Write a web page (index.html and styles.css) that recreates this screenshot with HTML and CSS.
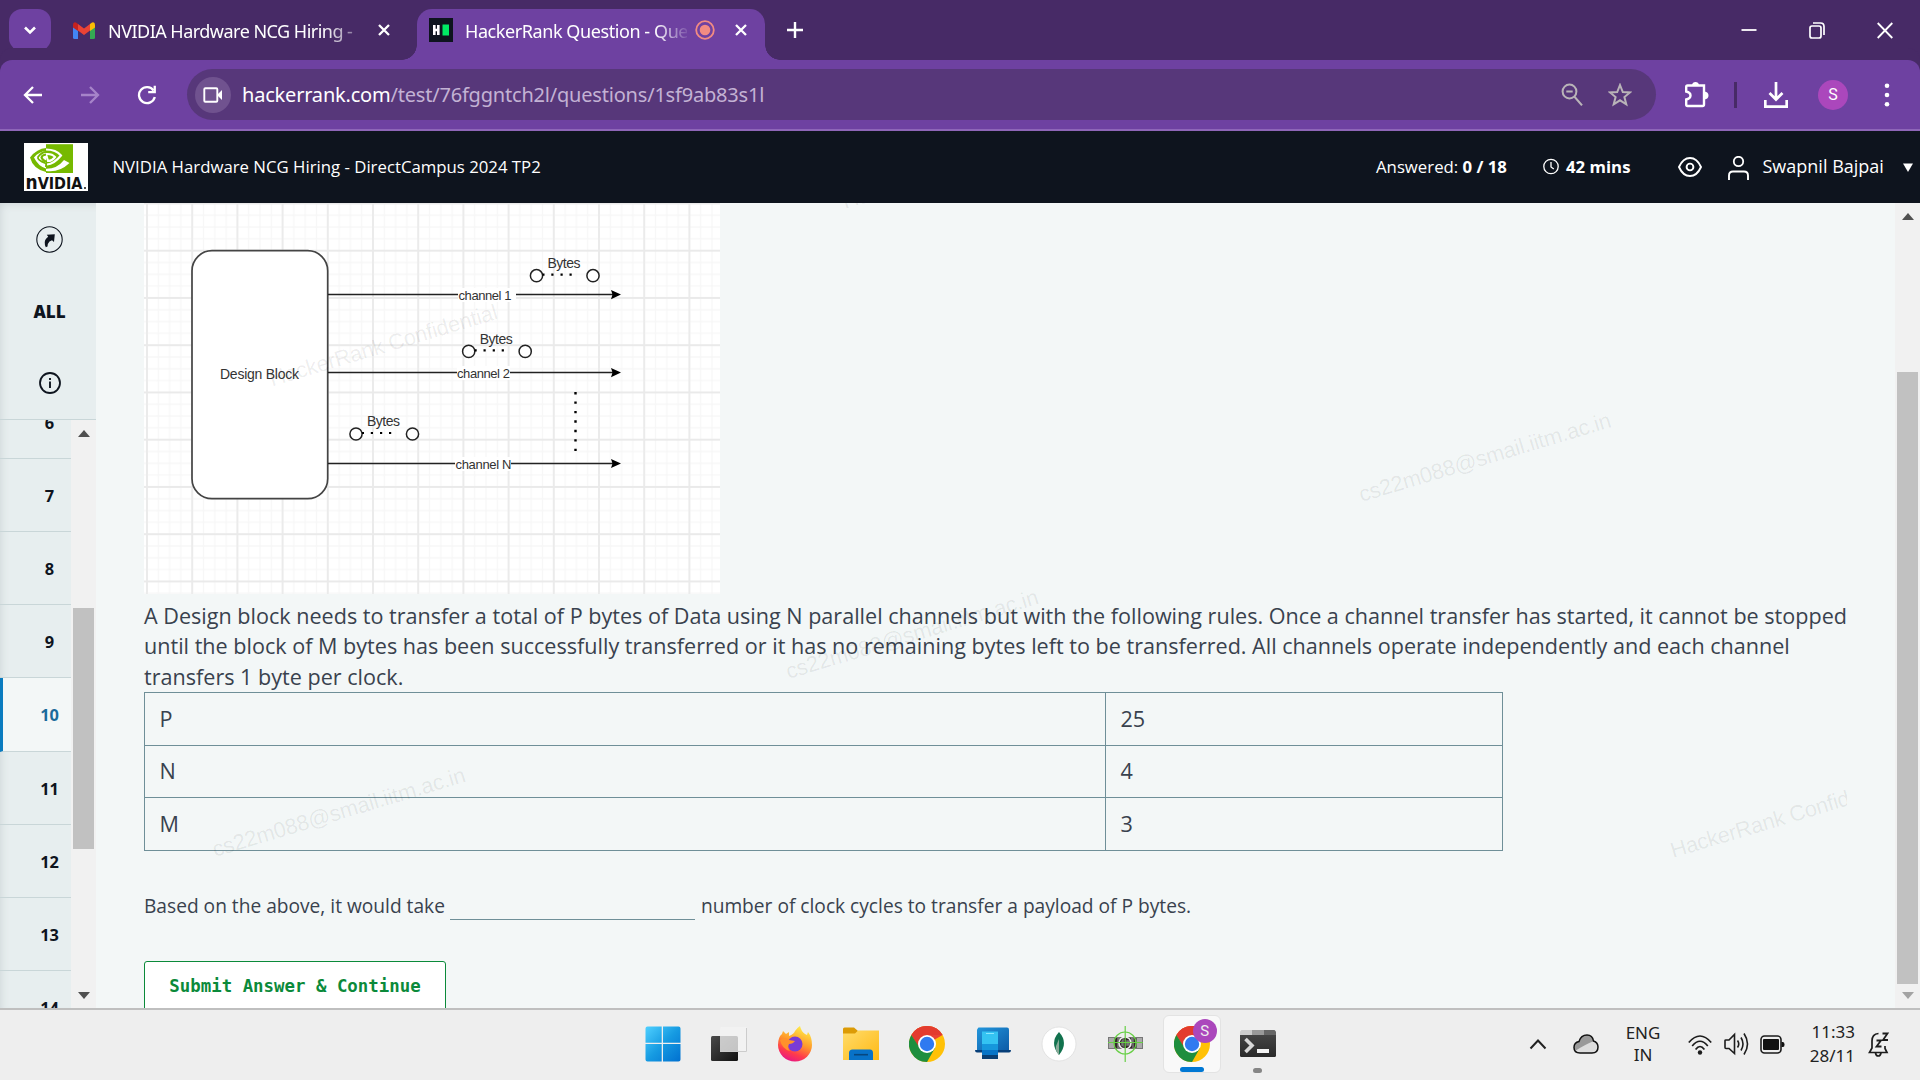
FILE: index.html
```html
<!DOCTYPE html>
<html lang="en">
<head>
<meta charset="utf-8">
<title>HackerRank Question</title>
<link rel="stylesheet" href="styles.css">
</head>
<body>
<svg width="0" height="0" class="defs">
  <defs>
    <symbol id="chrome" viewBox="0 0 36 36">
      <circle cx="18" cy="18" r="18" fill="#ffc107"/>
      <path d="M18 18 L2.4 9 A18 18 0 0 1 33.6 9 Z" fill="#ea4335"/>
      <path d="M2.4 9 A18 18 0 0 0 18 36 L26 22 L10.5 22 Z" fill="#1e8e3e"/>
      <path d="M2.4 9 L10.2 22.5 L18 18 L18 9 Z" fill="#1e8e3e"/>
      <path d="M2.4 9 A18 18 0 0 1 33.6 9 L18 9 L10.2 13.5 L9.5 20 Z" fill="#e33b2e"/>
      <circle cx="18" cy="18" r="9" fill="#fff"/>
      <circle cx="18" cy="18" r="7.2" fill="#2f7af0"/>
    </symbol>
    <linearGradient id="winBlue" x1="0" y1="0" x2="1" y2="1"><stop offset="0" stop-color="#4fd0ff"/><stop offset=".5" stop-color="#169be2"/><stop offset="1" stop-color="#0070d0"/></linearGradient>
    <linearGradient id="darkSq" x1="0" y1="0" x2="1" y2="1"><stop offset="0" stop-color="#4a4a4a"/><stop offset="1" stop-color="#111"/></linearGradient>
    <linearGradient id="fox" x1=".7" y1="0" x2=".3" y2="1"><stop offset="0" stop-color="#fff04a"/><stop offset=".45" stop-color="#ff9a2a"/><stop offset=".75" stop-color="#ff3b4b"/><stop offset="1" stop-color="#e5158a"/></linearGradient>
    <linearGradient id="folder" x1="0" y1="0" x2="1" y2="1"><stop offset="0" stop-color="#ffdc6b"/><stop offset="1" stop-color="#ffb914"/></linearGradient>
    <linearGradient id="phone" x1="0" y1="0" x2="1" y2="1"><stop offset="0" stop-color="#2296dc"/><stop offset="1" stop-color="#0c5aa6"/></linearGradient>
    <linearGradient id="term" x1="0" y1="0" x2="0" y2="1"><stop offset="0" stop-color="#444"/><stop offset="1" stop-color="#2a2a2a"/></linearGradient>
  </defs>
</svg>

<header class="tabstrip">
  <button class="tab-search"><svg width="14" height="10" viewBox="0 0 14 10"><path d="M2 2.5 L7 7.5 L12 2.5" fill="none" stroke="#fff" stroke-width="2.6"/></svg></button>
  <div class="tab">
    <svg class="gmail" width="22" height="17" viewBox="0 0 22 17">
      <path d="M0 3v12.5Q0 17 1.5 17H5V7z" fill="#4285f4"/><path d="M22 3v12.5Q22 17 20.5 17H17V7z" fill="#34a853"/>
      <path d="M17 2 L19 .5 Q22 -.5 22 3 V5.5 L17 9z" fill="#fbbc04"/><path d="M5 2 L3 .5 Q0 -.5 0 3 V5.5 L5 9z" fill="#c5221f"/><path d="M5 2 L11 6.6 L17 2 V8.5 L11 13 L5 8.5z" fill="#ea4335"/>
    </svg>
    <span class="tab-title gmail-title">NVIDIA Hardware NCG Hiring -</span>
    <svg width="14" height="14" viewBox="0 0 14 14"><path d="M2 2 L12 12 M12 2 L2 12" stroke="#fff" stroke-width="2.3"/></svg>
  </div>
  <div class="tab active">
    <svg width="24" height="24" viewBox="0 0 24 24"><path fill="#0e141e" d="M0 0h24v24H0z"/><path d="M5.3 7v10M9.3 7v10M5 12h5" stroke="#fff" stroke-width="2.6"/><path fill="#00ea64" d="M13.5 6.5h6.5v11h-6.5z"/></svg>
    <span class="tab-title hr-title">HackerRank Question - Que</span>
    <svg width="20" height="20" viewBox="0 0 20 20"><circle cx="10" cy="10" r="8.8" fill="none" stroke="#f28b82" stroke-width="1.8"/><circle cx="10" cy="10" r="5.3" fill="#f28b82"/></svg>
    <svg class="tab-close" width="14" height="14" viewBox="0 0 14 14"><path d="M2 2 L12 12 M12 2 L2 12" stroke="#fff" stroke-width="2.3"/></svg>
  </div>
  <svg class="plus" width="18" height="18" viewBox="0 0 18 18"><path d="M9 1v16M1 9h16" stroke="#fff" stroke-width="2.4"/></svg>
  <div class="winctl">
    <svg width="16" height="16" viewBox="0 0 16 16"><path d="M.5 8h15" stroke="#fff" stroke-width="1.8"/></svg>
    <svg width="16" height="17" viewBox="0 0 16 17"><rect x="1" y="4" width="11" height="12" rx="2" fill="none" stroke="#fff" stroke-width="1.7"/><path d="M4 1h7.5Q15 1 15 4.5V13" fill="none" stroke="#fff" stroke-width="1.7"/></svg>
    <svg width="16" height="17" viewBox="0 0 16 17"><path d="M.7 1 L15.3 16 M15.3 1 L.7 16" stroke="#fff" stroke-width="1.8"/></svg>
  </div>
</header>

<nav class="toolbar">
  <svg class="ic back" width="20" height="20" viewBox="0 0 20 20"><path d="M19 10H2.5M10 2 L2 10 L10 18" fill="none" stroke="#fff" stroke-width="2.3"/></svg>
  <svg class="ic fwd" width="20" height="20" viewBox="0 0 20 20"><path d="M1 10H17.5M10 2 L18 10 L10 18" fill="none" stroke="#a684c9" stroke-width="2.3"/></svg>
  <svg class="ic reload" width="20" height="20" viewBox="0 0 20 20"><path d="M16.6 5.5 A8 8 0 1 0 17.8 12" fill="none" stroke="#fff" stroke-width="2.3"/><path d="M18.9 .8V8.2H11.2V6H16.6V.8z" fill="#fff"/></svg>
  <div class="omnibox">
    <span class="cam"><svg width="20" height="16" viewBox="0 0 20 16"><rect x="1.3" y="1.3" width="13" height="13.4" rx="1" fill="none" stroke="#fff" stroke-width="1.9"/><path d="M15 7 L19 3V13L15 9z" fill="#fff"/></svg></span>
    <span class="url"><b>hackerrank.com</b>/test/76fggntch2l/questions/1sf9ab83s1l</span>
    <svg class="mag" width="22" height="24" viewBox="0 0 22 24"><circle cx="8.5" cy="8.5" r="6.9" fill="none" stroke="#b9b4b8" stroke-width="2"/><path d="M5.3 8.5h6.4M13.4 13.6 L21 22.4" stroke="#b9b4b8" stroke-width="2.2"/></svg>
    <svg class="star" width="24" height="24" viewBox="0 0 24 24"><path d="M12 2 L14.8 9 L22 9.4 L16.4 14 L18.3 21.3 L12 17.3 L5.7 21.3 L7.6 14 L2 9.4 L9.2 9z" fill="none" stroke="#b9b4b8" stroke-width="2"/></svg>
  </div>
  <div class="tools">
    <svg width="26" height="28" viewBox="0 0 26 28"><path d="M3.5 4.5H20V23.5Q20 25 18.5 25H3.5Q2.2 25 2.2 23.5V18.5Q6.5 17.5 6.5 14.5T2.2 10.5V6Q2.2 4.5 3.5 4.5z" fill="none" stroke="#fff" stroke-width="2.4"/><path d="M8 4Q8.5 1 11.5 1T15 4zM20.5 10.5Q24.5 11 24.5 14.5T20.5 18.5z" fill="#fff"/></svg>
    <i class="sep"></i>
    <svg width="24" height="28" viewBox="0 0 24 28"><path d="M12 1V18M5.5 12 L12 18.5 L18.5 12M1.3 19V25.6H22.7V19" fill="none" stroke="#fff" stroke-width="2.7"/></svg>
    <span class="avatar">S</span>
    <svg width="6" height="24" viewBox="0 0 6 24"><circle cx="3" cy="2.8" r="2.3" fill="#fff"/><circle cx="3" cy="12" r="2.3" fill="#fff"/><circle cx="3" cy="21.2" r="2.3" fill="#fff"/></svg>
  </div>
</nav>

<section class="testbar">
  <svg class="logo" width="64" height="48" viewBox="0 0 64 48">
    <path fill="#fff" d="M0 0h64v48H0z"/><path fill="#76b900" d="M22 1.2H49V30H22z"/>
    <path d="M6 14.5 Q13 5.5 22 5 V8 Q15 8.5 10 14.5 Q14 23 22 25.5 V29 Q9 26 6 14.5z" fill="#76b900"/>
    <path d="M22 5 Q33 4.5 39 12 Q31 23 22 23 V20.5 Q13 17 14 14 Q18 8.8 22 9" fill="none" stroke="#76b900" stroke-width="1.8"/>
    <path d="M22 6.5 Q32 6.5 37 12.5 Q30 21 23 21.5 M22 11 Q28 10.5 31 14 Q28 18 24 18 L22 11" fill="none" stroke="#fff" stroke-width="2.1"/>
    <path d="M22 25.8 Q33 26 40 17 L45.5 20 Q35 30 22 28z" fill="#fff"/>
    <path d="M22 11.5 Q18 12 17.5 14.5 Q19 18 22 18.6" fill="none" stroke="#76b900" stroke-width="2"/>
    <text x="1.500" y="46" class="logo-text" textLength="57" lengthAdjust="spacingAndGlyphs"><tspan class="logo-n">n</tspan>VIDIA</text><circle cx="61" cy="45" r="1" fill="#111"/>
  </svg>
  <span class="test-title">NVIDIA Hardware NCG Hiring - DirectCampus 2024 TP2</span>
  <span class="answered">Answered: <b>0 / 18</b></span>
  <span class="clock"><svg width="16" height="17" viewBox="0 0 16 17"><circle cx="8" cy="8.5" r="7.2" fill="none" stroke="#fff" stroke-width="1.3"/><path d="M8 4V9L10.8 11" fill="none" stroke="#fff" stroke-width="1.3"/></svg><b>42 mins</b></span>
  <svg class="eye" width="24" height="20" viewBox="0 0 24 20"><path d="M1 10 Q5 1 12 1T23 10Q19 19 12 19T1 10z" fill="none" stroke="#fff" stroke-width="1.9"/><circle cx="12" cy="10" r="3.4" fill="none" stroke="#fff" stroke-width="1.9"/></svg>
  <svg class="person" width="21" height="24" viewBox="0 0 21 24"><circle cx="10.5" cy="5.5" r="4.7" fill="none" stroke="#fff" stroke-width="1.8"/><path d="M1 24V19.5Q1 15.5 5 15.5H16Q20 15.5 20 19.5V24" fill="none" stroke="#fff" stroke-width="1.9"/></svg>
  <span class="user">Swapnil Bajpai</span>
  <svg class="caret" width="10" height="9" viewBox="0 0 10 9"><path d="M0 .5H10L5 9z" fill="#fff"/></svg>
</section>

<div class="page">
  <aside class="side">
    <div class="side-top">
      <svg width="27" height="27" viewBox="0 0 27 27"><circle cx="13.5" cy="13.5" r="12.7" fill="none" stroke="#0e141e" stroke-width="1.1"/><path d="M9.8 21.3 Q7.3 15.5 10.5 12.3 L12.2 10.8 L10.8 8.8 L18.8 8.2 L18 16 L16 14.3 L13.5 15.5 Q11.5 17.5 11.5 20.5z" fill="#0e141e"/></svg>
      <b>ALL</b>
      <svg class="info" width="22" height="22" viewBox="0 0 22 22"><circle cx="11" cy="11" r="10" fill="none" stroke="#0e141e" stroke-width="1.8"/><path d="M11 9.5V16M11 6V8" stroke="#0e141e" stroke-width="1.9"/></svg>
    </div>
    <div class="side-list">
      <ol class="qs">
        <li>6</li><li>7</li><li>8</li><li>9</li><li class="cur">10</li><li>11</li><li>12</li><li>13</li><li>14</li>
      </ol>
      <div class="sbar">
        <svg width="12" height="7" viewBox="0 0 12 7"><path d="M0 7 L6 0 L12 7z" fill="#505050"/></svg>
        <i class="thumb"></i>
        <svg width="12" height="7" viewBox="0 0 12 7"><path d="M0 0H12L6 7z" fill="#505050"/></svg>
      </div>
    </div>
  </aside>

  <main class="content">
    <svg class="diagram" width="576" height="391" viewBox="144 203 576 391">
      <defs>
        <pattern id="grid" patternUnits="userSpaceOnUse" x="147" y="250.7" width="45.2" height="47.25">
          <path d="M11.3 0V47.25M22.6 0V47.25M33.9 0V47.25M0 11.8H45.2M0 23.6H45.2M0 35.4H45.2" stroke="#f7f7f7" stroke-width="1.3"/>
          <path d="M0 0V47.25M45.2 0V47.25M0 0H45.2M0 47.25H45.2" stroke="#eaeaea" stroke-width="1.8"/>
        </pattern>
        <g id="bytes" fill="none" stroke="#222" stroke-width="1.5">
          <circle cx="0" cy="0" r="6.1" fill="#fff"/><circle cx="56.5" cy="0" r="6.1" fill="#fff"/>
          <path d="M6 -1h2M14.8 -1h2.2M24 -1h2.2M33 -1h2.2" stroke="#000" stroke-width="2.2"/>
        </g>
      </defs>
      <path fill="#fff" d="M144 203h576v391H144z"/>
      <path fill="url(#grid)" d="M144 203h576v391H144z"/>
      <rect x="192" y="250.7" width="135.7" height="248" rx="20" fill="#fff" stroke="#444" stroke-width="1.7"/>
      <path d="M328 294.6H614M328 372.6H614M328 463.5H614" stroke="#222" stroke-width="1.5"/>
      <path d="M611 290l10 4.600L611 299.200l1.500-4.600zM611 368l10 4.600L611 377.200l1.500-4.600zM611 458.900l10 4.600L611 468.100l1.500-4.600z"/>
      <path fill="#fff" d="M458 288h58v14h-58zM457 366h53v14h-53zM455 457h56v14h-56z"/>
      <path d="M575.5 392v60" stroke="#000" stroke-width="2.4" stroke-dasharray="2.4 7.04"/>
      <use href="#bytes" x="536.5" y="275.7"/><use href="#bytes" x="468.7" y="351.4"/><use href="#bytes" x="356" y="434"/>
      <g class="dtext">
        <text x="220" y="379" textLength="79">Design Block</text>
        <text x="547.5" y="268" textLength="33">Bytes</text><text x="479.7" y="343.5" textLength="33">Bytes</text><text x="367" y="426" textLength="33">Bytes</text>
        <g class="small"><text x="458.5" y="300" textLength="53">channel 1</text><text x="457" y="378" textLength="53">channel 2</text><text x="455.5" y="469" textLength="56">channel N</text></g>
      </g>
    </svg>
    <p class="para">A Design block needs to transfer a total of P bytes of Data using N parallel channels but with the following rules. Once a channel transfer has started, it cannot be stopped<br>until the block of M bytes has been successfully transferred or it has no remaining bytes left to be transferred. All channels operate independently and each channel<br>transfers 1 byte per clock.</p>
    <table class="vals">
      <tr><td class="k">P</td><td>25</td></tr>
      <tr><td class="k">N</td><td>4</td></tr>
      <tr><td class="k">M</td><td>3</td></tr>
    </table>
    <p class="blank"><span>Based on the above, it would take</span><i class="line"></i><span>number of clock cycles to transfer a payload of P bytes.</span></p>
    <button class="submit">Submit Answer &amp; Continue</button>
    <svg class="marks" width="1751" height="805" viewBox="96 203 1751 805">
      <text transform="translate(215 857) rotate(-16.7)" textLength="263">cs22m088@smail.iitm.ac.in</text>
      <text transform="translate(788.5 679) rotate(-16.7)" textLength="262.500">cs22m088@smail.iitm.ac.in</text>
      <text transform="translate(1361.5 502) rotate(-16.7)" textLength="262">cs22m088@smail.iitm.ac.in</text>
      <text transform="translate(272 386.5) rotate(-16.7)" textLength="237">HackerRank Confidential</text>
      <text transform="translate(845 209) rotate(-16.7)" textLength="237">HackerRank Confidential</text>
      <text transform="translate(1673 858) rotate(-16.7)" textLength="237">HackerRank Confidential</text>
    </svg>
  </main>
  <div class="sbar main-bar">
    <svg width="12" height="7" viewBox="0 0 12 7"><path d="M0 7 L6 0 L12 7z" fill="#505050"/></svg>
    <i class="thumb"></i>
    <svg width="12" height="7" viewBox="0 0 12 7"><path d="M0 0H12L6 7z" fill="#a3a3a3"/></svg>
  </div>
</div>

<footer class="taskbar">
  <div class="apps">
    <span><svg width="36" height="36" viewBox="0 0 36 36"><path d="M2.5 .5H16.7V16.7H.5V2.5Q.5 .5 2.5 .5zM18 .5H33.5Q35.5 .5 35.5 2.5V16.7H18zM.5 18H16.7V35.5H2.5Q.5 35.5 .5 33.5zM18 18H35.5V33.5Q35.5 35.5 33.5 35.5H18z" fill="url(#winBlue)"/></svg></span>
    <span><svg width="36" height="36" viewBox="0 0 36 36"><rect y="10" width="27" height="25" rx="1.5" fill="url(#darkSq)"/><rect x="9" y="1" width="27" height="25" rx="1.5" fill="#f4f4f4" fill-opacity=".78"/><path d="M9 25.5H35.5V2" fill="none" stroke="#ccc"/></svg></span>
    <span><svg width="36" height="36" viewBox="0 0 36 36"><path d="M1 19 Q1 11 5 8 L6 5 L9 8 L12 6 V10 Q17 8 18 5 Q20 2 23 0 Q24 5 28 8 L30 9 L31 6 Q35 11 35 19 A17 16.5 0 0 1 1 19z" fill="url(#fox)"/><circle cx="18" cy="18" r="7.5" fill="#793bd6"/><path d="M3 14 Q8 10 12 14 L18 15 Q16 18 12 18 Q10 22 13 25 Q5 23 3 14z" fill="#ff912b"/></svg></span>
    <span><svg width="36" height="36" viewBox="0 0 36 36"><path d="M0 3Q0 1.5 1.5 1.5H11L15 5V9H0z" fill="#dc9b06"/><path d="M0 7.5H12L15 4.5H36V34H0z" fill="url(#folder)"/><path d="M6 34V27Q6 23.5 9.5 23.5H27Q30 23.5 30 27V34z" fill="#0872c8"/><path d="M11 28.7H25" stroke="#07477f" stroke-width="1.6"/></svg></span>
    <span><svg width="36" height="36"><use href="#chrome"/></svg></span>
    <span><svg width="36" height="36" viewBox="0 0 36 36"><path d="M3.5 1.5H32Q34 1.5 34 3.5V25H2V3.5z" fill="url(#phone)"/><path d="M0 24H36Q36 26.5 34 26.5H2Q0 26.5 0 24z" fill="#073f79"/><path d="M7 5.5H23V33H7z" fill="#34c3f2"/><path d="M7 18H23V25H7z" fill="#1697dc"/><path d="M7 24H23V30H7z" fill="#0674c7"/><path d="M7 29H23V33H7z" fill="#083e73"/><path d="M11 7.5H19" stroke="#8be6ff"/></svg></span>
    <span><svg width="36" height="36" viewBox="0 0 36 36"><circle cx="18" cy="18" r="17" fill="#fff" stroke="#ddd" stroke-width=".8"/><path d="M18 6 Q28 17 18 29 Q8 17 18 6z" fill="#12724e"/><path d="M18 13V29Q14 25 15 20z" fill="#88aa98"/></svg></span>
    <span><svg width="36" height="36" viewBox="0 0 36 36"><path d="M0 11H35V23H0z" fill="#777"/><path d="M1 12H6V22H1zM29 12H34V22H29z" fill="#aaa"/><path d="M8 12v10M14 12l-2 3v5l3 2M23 13h-6v8h6v-4M27 12v10" fill="none" stroke="#33272a" stroke-width="2.5"/><circle cx="17" cy="17" r="6" fill="none" stroke="#eee" stroke-width="1.6"/><circle cx="17" cy="17" r="11" fill="none" stroke="#67cf45" stroke-width="1.2"/><path d="M17.2 0V36M0 16.5H35" stroke="#67cf45" stroke-width="1.2"/></svg></span>
    <span class="on"><svg width="36" height="36"><use href="#chrome"/></svg><em>S</em></span>
    <span class="run"><svg width="36" height="28" viewBox="0 0 36 28"><path d="M0 5H36V25.5Q36 27 34.5 27H1.5Q0 27 0 25.5z" fill="url(#term)"/><path d="M1.5 0H12V5H0V1.5z" fill="#ccc"/><path d="M12 0H24V5H12z" fill="#999"/><path d="M24 0H34.5L36 1.5V5H24z" fill="#666"/><path d="M5.5 9 L12 15.5 L5.5 22" fill="none" stroke="#d8d8d8" stroke-width="3.6"/><rect x="17" y="19" width="12" height="4" fill="#f4f4f4"/></svg></span>
  </div>
  <div class="tray">
    <svg width="18" height="12" viewBox="0 0 18 12"><path d="M1.5 10.5 L9 2.5 L16.5 10.5" fill="none" stroke="#222" stroke-width="2"/></svg>
    <svg class="cloud" width="26" height="20" viewBox="0 0 26 20"><path d="M7 19Q1 19 1 13.5Q1 8.5 6 7.5Q8 1 14 1Q19.5 1 20.5 7Q25 8.5 25 13Q25 19 19 19z" fill="#999"/><path d="M2 17Q13 10 20 7.5Q25 9 25 13Q25 19 19 19H7z" fill="#ddd"/><path d="M7 19Q1 19 1 13.5Q1 8.5 6 7.5Q8 1 14 1Q19.5 1 20.5 7Q25 8.5 25 13Q25 19 19 19z" fill="none" stroke="#111" stroke-width="1.5"/></svg>
    <span class="lang">ENG<br>IN</span>
    <svg class="wifi" width="24" height="21" viewBox="0 0 24 21"><g fill="none" stroke="#1c1c1c" stroke-width="1.7"><path d="M.8 8.5Q12 -4.5 23.2 8.5M4.2 12Q12 2.5 19.8 12M7.6 15.5Q12 9.5 16.4 15.5"/></g><circle cx="12" cy="18.5" r="2.2" fill="#1c1c1c"/></svg>
    <svg class="vol" width="25" height="24" viewBox="0 0 25 24"><g fill="none" stroke="#1c1c1c" stroke-width="1.6"><path d="M1 8.5Q1 8 2 8H5L10.5 2.5V21.5L5 16.5H2Q1 16.5 1 15.5z"/><path d="M13.5 8.5Q16 12 13.5 15.5M17 5.5Q21 12 17 18.5M20 1.5Q27 12 20 22.5"/></g></svg>
    <svg class="bat" width="25" height="19" viewBox="0 0 25 19"><rect x="1" y="1" width="20" height="17" rx="3.5" fill="none" stroke="#1c1c1c" stroke-width="1.6"/><rect x="3" y="4" width="16" height="11" rx="1" fill="#111"/><path d="M21.5 7H23Q24.5 7 24.5 9.5T23 12H21.5z" fill="#111"/></svg>
    <span class="time">11:33<br>28/11</span>
    <svg class="bell" width="22" height="25" viewBox="0 0 22 25"><path d="M10.5 1.5Q4 2 4 9V16L1.5 20.5H19L17 16.5V14M7.5 21Q8 24 10.2 24T13 21" fill="none" stroke="#1c1c1c" stroke-width="1.7"/><path d="M8.5 8.5h4.5L8.5 14.5h5M14.5 1.5h5L15 8h5" fill="none" stroke="#1c1c1c" stroke-width="1.8"/></svg>
  </div>
</footer>
</body>
</html>
```
FILE: styles.css
```css
* { box-sizing: border-box; }
body { margin: 0; width: 1920px; height: 1080px; overflow: hidden; display: flex; flex-direction: column; font-family: "Open Sans", "Noto Sans", sans-serif; color: #39424e; }
svg { display: block; flex: none; }
.defs { position: absolute; }
button { font: inherit; padding: 0; border: 0; }

.tabstrip { height: 60px; flex: none; background: #472a66; display: flex; align-items: center; padding-left: 9px; color: #fff; font-size: 18px; }
.tab-search { width: 42px; height: 42px; border-radius: 13px; background: #6e41a1; display: flex; align-items: center; justify-content: center; }
.tab { width: 366px; height: 51px; align-self: flex-end; display: flex; align-items: center; padding: 0 0 9px 22px; }
.tab-title { white-space: nowrap; line-height: 30px; font-family: "Noto Sans", sans-serif; }
.gmail-title { width: 254px; margin: 2px 15px 0 13px; letter-spacing: -.52px; -webkit-mask-image: linear-gradient(90deg, #000 215px, transparent 265px); mask-image: linear-gradient(90deg, #000 215px, transparent 265px); }
.tab.active { position: relative; width: 348px; padding-left: 12px; background: #6e41a1; border-radius: 15px 15px 0 0; }
.tab.active::before, .tab.active::after { content: ""; position: absolute; bottom: 0; width: 15px; height: 15px; }
.tab.active::before { left: -15px; background: radial-gradient(circle at 0 0, transparent 14.5px, #6e41a1 15px); }
.tab.active::after { right: -15px; background: radial-gradient(circle at 100% 0, transparent 14.5px, #6e41a1 15px); }
.hr-title { width: 222px; margin: 2px 8px 0 12px; letter-spacing: -.42px; -webkit-mask-image: linear-gradient(90deg, #000 190px, transparent 226px); mask-image: linear-gradient(90deg, #000 190px, transparent 226px); }
.tab-close { margin-left: 19px; }
.plus { margin-left: 21px; }
.winctl { margin: 0 27px 0 auto; display: flex; gap: 52px; align-items: center; }

.toolbar { height: 71px; flex: none; background: #6e41a1; border-bottom: 2px solid #8e66b8; display: flex; align-items: center; padding-left: 23px; border-radius: 12px 12px 0 0; box-shadow: 0 -12px 0 #472a66; }
.ic { margin-right: 37px; }
.reload { margin-right: 30px; }
.omnibox { width: 1469px; height: 51px; border-radius: 26px; background: #57377a; display: flex; align-items: center; padding-left: 8px; }
.cam { width: 36px; height: 36px; border-radius: 50%; background: #70528f; display: flex; align-items: center; justify-content: center; }
.url { margin-left: 11px; width: 1319px; white-space: nowrap; font: 20px "Noto Sans", sans-serif; color: #c3b2d4; letter-spacing: -.2px; }
.url b { font-weight: 400; color: #fff; }
.star { margin-left: 25px; }
.tools { flex: 1; display: flex; align-items: center; padding-left: 28px; }
.sep { width: 3px; height: 26px; background: #472a66; margin: 0 27px 0 24px; }
.avatar { width: 30px; height: 30px; border-radius: 50%; background: #ab47bc; color: #fff; display: flex; align-items: center; justify-content: center; font: 16px Roboto, sans-serif; margin: 0 36px 0 30px; }

.testbar { height: 72px; flex: none; background: #0e141e; color: #fff; display: flex; align-items: center; padding-left: 24px; font-size: 16.78px; white-space: nowrap; }
.testbar span { padding-bottom: 2px; }
.logo-text { font: bold 16px "DejaVu Sans", sans-serif; fill: #111; }
.logo-n { font-size: 19px; }
.test-title { width: 1239px; margin-left: 24.5px; }
.answered { width: 167px; margin-left: 24.5px; }
.clock { width: 134.5px; display: flex; align-items: center; gap: 7px; }
.person { margin-left: 26px; margin-top: 2px; }
.user { width: 121px; margin: 0 19px 0 14px; font-size: 18px; }

.page { height: 805px; flex: none; display: flex; background: #f3f7f7; overflow: hidden; }
.side { width: 96px; background: #e7eeef; display: flex; flex-direction: column; color: #0e141e; font-weight: 700; }
.side-top { height: 217px; flex: none; border-bottom: 1px solid #c9d6d8; box-shadow: inset 8px 8px 10px -8px #c9d1d4; display: flex; flex-direction: column; align-items: center; padding: 23px 0 0 3px; font-size: 17px; }
.side-top b { line-height: 24px; margin: 47px 0 48px; }
.side-list { height: 588px; display: flex; overflow: hidden; }
.qs { list-style: none; margin: -34.4px 0 0; padding: 0; width: 71px; font-size: 16.4px; box-shadow: inset 8px 0 10px -8px #c9d1d4; }
.qs li { height: 73.2px; line-height: 73px; border-bottom: 1px solid #c9d6d8; text-align: center; padding-left: 28px; }
.qs .cur { background: #f3f7f7; color: #1a6b9b; border-left: 3px solid #097bbf; padding-left: 25px; }
.sbar { width: 25px; background: #f1f1f1; display: flex; flex-direction: column; align-items: center; padding: 10px 0 9px; }
.sbar .thumb { width: 21px; background: #c1c1c1; height: 241px; margin: 171px 0 auto; }
.main-bar .thumb { height: 612px; margin-top: 152px; }

.content { position: relative; width: 1799px; padding-left: 48px; }
.dtext { font: 14px "Liberation Sans", sans-serif; fill: #333; }
.small { font-size: 13px; }
.para { margin: 7px 0 0; height: 91px; font-size: 21.59px; line-height: 30.4px; white-space: nowrap; }
.vals { border-collapse: collapse; width: 1359px; table-layout: fixed; font-size: 21.6px; line-height: 30px; }
.vals td { border: 1px solid #6f8f98; height: 52.6px; padding: 0 14.5px; }
.vals .k { width: 961px; }
.blank { margin: 40px 0 0; height: 30px; display: flex; align-items: center; font-size: 19.17px; white-space: nowrap; }
.line { width: 245px; height: 29px; border-bottom: 1px solid #6f8f98; margin: 0 5.5px 1px; align-self: flex-end; }
.submit { margin-top: 40px; width: 302px; height: 60px; display: block; background: #fff; border: 1px solid #0b8a3a; border-radius: 3px; color: #0b8a3a; font: bold 17.4px/48px "DejaVu Sans Mono", monospace; padding-bottom: 9px; }
.marks { position: absolute; left: 0; top: 0; pointer-events: none; font: 22px "Liberation Sans", sans-serif; fill: rgba(0, 0, 0, .075); }

.taskbar { height: 72px; flex: none; background: #eee; border-top: 2px solid #bfbfbf; display: flex; align-items: center; padding: 0 0 2px 629.5px; color: #222; }
.apps { display: flex; width: 661.5px; }
.apps span { width: 66.15px; height: 58px; display: flex; align-items: center; justify-content: center; position: relative; }
.apps .on { width: 58px; margin: 0 4px; background: #f9f9f9; border: 1px solid #e3e3e3; border-radius: 6px; }
.apps .on em { position: absolute; right: 3px; top: 3px; width: 24px; height: 24px; border-radius: 50%; background: #ab47bc; color: #eee; font: 15px/24px Roboto, sans-serif; text-align: center; }
.apps .on::after, .apps .run::after { content: ""; position: absolute; bottom: 0; width: 24px; height: 5px; border-radius: 3px; background: #0078d4; }
.apps .run::after { width: 9px; background: #868686; }
.tray { display: flex; align-items: center; margin-left: 238px; font: 18px/22px "Noto Sans", sans-serif; }
.cloud { margin-left: 26px; }
.lang { width: 44px; text-align: center; margin-left: 22px; font-size: 17px; }
.wifi { margin-left: 23px; }
.vol { margin-left: 12px; }
.bat { margin-left: 11px; }
.time { width: 56px; text-align: right; margin: 0 0 0 14px; font-size: 17px; line-height: 24px; }
.bell { margin-left: 13px; }
```
